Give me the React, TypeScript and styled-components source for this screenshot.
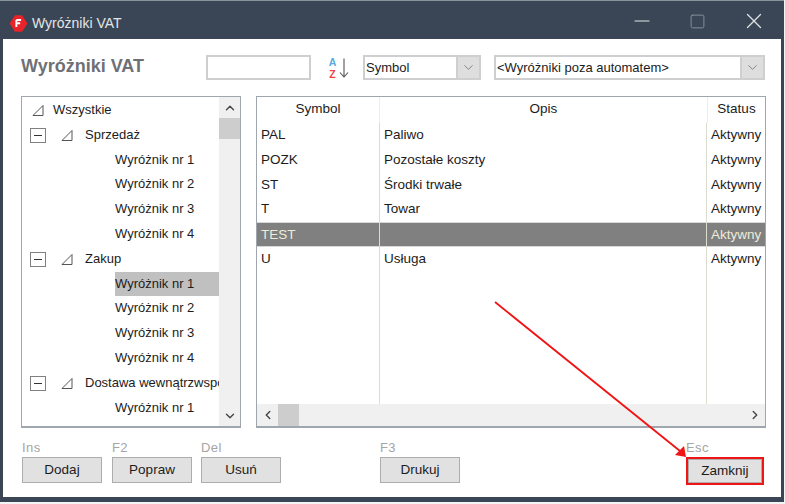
import styled, { createGlobalStyle } from 'styled-components';
import { ChevronDown, ChevronUp, ChevronLeft, ChevronRight, X, Minus, Square } from 'lucide-react';

const GlobalStyle = createGlobalStyle`
  html, body { margin: 0; padding: 0; background: #f4f5f6; }
  body { font-family: "Liberation Sans", Arial, sans-serif; font-size: 13px; color: #1c1c1c; }
`;

const treeRows = [
  { label: 'Wszystkie', level: 0 },
  { label: 'Sprzedaż', level: 1 },
  { label: 'Wyróżnik nr 1', level: 2 },
  { label: 'Wyróżnik nr 2', level: 2 },
  { label: 'Wyróżnik nr 3', level: 2 },
  { label: 'Wyróżnik nr 4', level: 2 },
  { label: 'Zakup', level: 1 },
  { label: 'Wyróżnik nr 1', level: 2, selected: true },
  { label: 'Wyróżnik nr 2', level: 2 },
  { label: 'Wyróżnik nr 3', level: 2 },
  { label: 'Wyróżnik nr 4', level: 2 },
  { label: 'Dostawa wewnątrzwspólnotowa', level: 1 },
  { label: 'Wyróżnik nr 1', level: 2 },
];

const gridRows = [
  { symbol: 'PAL', opis: 'Paliwo' },
  { symbol: 'POZK', opis: 'Pozostałe koszty' },
  { symbol: 'ST', opis: 'Środki trwałe' },
  { symbol: 'T', opis: 'Towar' },
  { symbol: 'TEST', opis: '', selected: true },
  { symbol: 'U', opis: 'Usługa' },
];

const App = () => {
  return (
    <Page>
      <GlobalStyle />
      <Window>
        <TitleBar>
          <AppLogo viewBox="0 0 16 16">
            <polygon points="5,1 11,1 15.5,8 11,15 5,15 0.5,8" fill="#e8232a" />
            <path d="M6.2 5h4M6.2 5v6M6.2 7.8h3.2" stroke="#fff" strokeWidth="1.6" fill="none" />
          </AppLogo>
          <WindowTitle>Wyróżniki VAT</WindowTitle>
          <WindowButtons>
            <Minus size={24} strokeWidth={1.2} />
            <Square size={17} strokeWidth={1.4} />
            <X size={26} strokeWidth={1.2} />
          </WindowButtons>
        </TitleBar>
        <Client>
          <Toolbar>
            <Heading>Wyróżniki VAT</Heading>
            <SearchInput />
            <SortIcon>
              <SortLetters>
                <SortA>A</SortA>
                <SortZ>Z</SortZ>
              </SortLetters>
              <SortArrow viewBox="0 0 10 20">
                <path d="M5 0.5V19M1 14.5L5 19L9 14.5" fill="none" stroke="#555" strokeWidth="1.1" />
              </SortArrow>
            </SortIcon>
            <Combo $width={118}>
              <ComboText>Symbol</ComboText>
              <ComboButton>
                <ChevronDown size={15} strokeWidth={1.2} color="#666" />
              </ComboButton>
            </Combo>
            <Combo $width={271} $gap={13}>
              <ComboText>&lt;Wyróżniki poza automatem&gt;</ComboText>
              <ComboButton>
                <ChevronDown size={15} strokeWidth={1.2} color="#666" />
              </ComboButton>
            </Combo>
          </Toolbar>
          <Panels>
            <TreePanel>
              <TreeList>
                {treeRows.map((row, index) => (
                  <TreeRow key={index} $level={row.level}>
                    {row.level === 1 && <Collapse />}
                    {row.level < 2 && (
                      <TreeArrow viewBox="0 0 12 12" $level={row.level}>
                        <path d="M1 11.5H11V1.5Z" fill="none" stroke="#555" strokeWidth="1" />
                      </TreeArrow>
                    )}
                    <TreeLabel $selected={row.selected}>{row.label}</TreeLabel>
                  </TreeRow>
                ))}
              </TreeList>
              <VScroll>
                <ScrollEnd>
                  <ChevronUp size={14} strokeWidth={2.4} color="#444" />
                </ScrollEnd>
                <VThumb />
                <ScrollFill />
                <ScrollEnd>
                  <ChevronDown size={14} strokeWidth={2.4} color="#444" />
                </ScrollEnd>
              </VScroll>
            </TreePanel>
            <GridPanel>
              <GridHead>
                <HeadCell $width={123}>Symbol</HeadCell>
                <HeadCell $width={328}>Opis</HeadCell>
                <HeadCell $width={57}>Status</HeadCell>
              </GridHead>
              <GridBody>
                {gridRows.map((row) => (
                  <GridRow key={row.symbol} $selected={row.selected}>
                    <Cell $width={123}>{row.symbol}</Cell>
                    <Cell $width={327}>{row.opis}</Cell>
                    <Cell $width={58}>Aktywny</Cell>
                  </GridRow>
                ))}
                <GridFill>
                  <FillCell $width={123} />
                  <FillCell $width={327} />
                </GridFill>
              </GridBody>
              <HScroll>
                <HEnd>
                  <ChevronLeft size={14} strokeWidth={2.4} color="#444" />
                </HEnd>
                <HThumb />
                <ScrollFill />
                <HEnd>
                  <ChevronRight size={14} strokeWidth={2.4} color="#444" />
                </HEnd>
              </HScroll>
            </GridPanel>
          </Panels>
          <Footer>
            <Action $gap={0}>
              <Shortcut>Ins</Shortcut>
              <ActionButton>Dodaj</ActionButton>
            </Action>
            <Action $gap={10}>
              <Shortcut>F2</Shortcut>
              <ActionButton>Popraw</ActionButton>
            </Action>
            <Action $gap={9}>
              <Shortcut>Del</Shortcut>
              <ActionButton>Usuń</ActionButton>
            </Action>
            <Action $gap={99}>
              <Shortcut>F3</Shortcut>
              <ActionButton>Drukuj</ActionButton>
            </Action>
            <Action $gap={226}>
              <Shortcut>Esc</Shortcut>
              <ActionButton $marked>Zamknij</ActionButton>
            </Action>
          </Footer>
        </Client>
      </Window>
      <Annotation viewBox="0 0 785 504">
        <line x1="495" y1="302" x2="680" y2="451" stroke="#f01414" strokeWidth="1.8" />
        <polygon points="686,457 675,455 684,446" fill="#f01414" />
      </Annotation>
    </Page>
  );
};

export default App;

const Page = styled.div`
  position: relative;
  width: 785px;
  height: 504px;
  overflow: hidden;
`;

const Window = styled.div`
  width: 784px;
  height: 502px;
  box-sizing: border-box;
  display: flex;
  flex-direction: column;
  background: #3a4655;
  border-top: 1px solid #8b939c;
  padding: 0 3px 5px 3px;
`;

const TitleBar = styled.div`
  display: flex;
  align-items: center;
  height: 38px;
  margin-left: 6px;
  flex-shrink: 0;
`;

const AppLogo = styled.svg`
  width: 19px;
  height: 19px;
  margin-top: 6px;
`;

const WindowTitle = styled.div`
  margin: 6px 0 0 4px;
  color: #e2e5e8;
  font-size: 14px;
`;

const WindowButtons = styled.div`
  display: flex;
  align-items: center;
  gap: 35px;
  margin: 2px 14px 0 auto;
  color: #e0e3e6;
  svg:nth-child(2) { color: #87909a; }
`;

const Client = styled.div`
  flex: 1;
  display: flex;
  flex-direction: column;
  background: #fff;
  padding: 0 0 0 18px;
  min-height: 0;
`;

const Toolbar = styled.div`
  display: flex;
  align-items: flex-start;
  height: 57px;
  padding-top: 16px;
  box-sizing: border-box;
  flex-shrink: 0;
`;

const Heading = styled.div`
  width: 185px;
  margin-top: 1px;
  color: #6f7076;
  font-size: 18px;
  font-weight: 700;
  line-height: 20px;
`;

const SearchInput = styled.div`
  width: 105px;
  height: 25px;
  box-sizing: border-box;
  border: 2px solid #cdcfd0;
`;

const SortIcon = styled.div`
  display: flex;
  align-items: center;
  gap: 2px;
  width: 35px;
  height: 25px;
  margin-left: 17px;
`;

const SortLetters = styled.div`
  display: flex;
  flex-direction: column;
  align-items: center;
  width: 9px;
  font-size: 10.5px;
  font-weight: 700;
  line-height: 12px;
`;

const SortA = styled.span`
  color: #58a9df;
`;

const SortZ = styled.span`
  color: #ee3f45;
`;

const SortArrow = styled.svg`
  width: 10px;
  height: 20px;
`;

const Combo = styled.div<{ $width: number; $gap?: number }>`
  display: flex;
  align-items: center;
  justify-content: space-between;
  width: ${(props) => props.$width}px;
  height: 25px;
  margin-left: ${(props) => props.$gap ?? 0}px;
  box-sizing: border-box;
  border: 2px solid #cdcfd0;
`;

const ComboText = styled.div`
  padding-left: 1px;
  font-size: 13px;
`;

const ComboButton = styled.div`
  display: flex;
  align-items: center;
  justify-content: center;
  width: 23px;
  height: 21px;
  box-sizing: border-box;
  background: #dedede;
  border-left: 2px solid #cdcfd0;
`;

const Panels = styled.div`
  display: flex;
  gap: 15px;
  height: 332px;
  flex-shrink: 0;
`;

const TreePanel = styled.div`
  display: flex;
  width: 220px;
  box-sizing: border-box;
  border: 1px solid #a0a6ad;
  border-bottom-width: 2px;
`;

const TreeList = styled.div`
  flex: 1;
  min-width: 0;
  overflow: hidden;
  padding-top: 1px;
`;

const TreeRow = styled.div<{ $level: number }>`
  display: flex;
  align-items: center;
  height: 24.8px;
  white-space: nowrap;
  padding-left: ${(props) => (props.$level === 0 ? 10 : props.$level === 1 ? 8 : 93)}px;
`;

const Collapse = styled.div`
  position: relative;
  width: 16px;
  height: 15px;
  box-sizing: border-box;
  border: 1px solid #808080;
  margin-right: 15px;
  flex-shrink: 0;
  &::after {
    content: '';
    position: absolute;
    left: 3px;
    right: 3px;
    top: 6px;
    height: 1px;
    background: #333;
  }
`;

const TreeArrow = styled.svg<{ $level: number }>`
  width: 12px;
  height: 12px;
  margin-right: ${(props) => (props.$level === 0 ? 9 : 12)}px;
  flex-shrink: 0;
`;

const TreeLabel = styled.div<{ $selected?: boolean }>`
  flex: ${(props) => (props.$selected ? 1 : 'none')};
  height: 24.8px;
  line-height: 24px;
  background: ${(props) => (props.$selected ? '#c0c0c0' : 'transparent')};
  font-size: 13px;
`;

const VScroll = styled.div`
  display: flex;
  flex-direction: column;
  width: 21px;
  flex-shrink: 0;
  background: #f0f0f0;
`;

const ScrollEnd = styled.div`
  display: flex;
  align-items: center;
  justify-content: center;
  height: 21px;
  flex-shrink: 0;
`;

const VThumb = styled.div`
  height: 21px;
  background: #cdcdcd;
`;

const ScrollFill = styled.div`
  flex: 1;
`;

const GridPanel = styled.div`
  display: flex;
  flex-direction: column;
  width: 510px;
  box-sizing: border-box;
  border: 1px solid #a0a6ad;
  border-bottom-width: 2px;
  overflow: hidden;
`;

const GridHead = styled.div`
  display: flex;
  height: 26px;
  flex-shrink: 0;
`;

const HeadCell = styled.div<{ $width: number }>`
  width: ${(props) => props.$width}px;
  box-sizing: border-box;
  text-align: center;
  line-height: 24px;
  font-size: 13.5px;
  border-right: 1px solid #ececec;
  flex-shrink: 0;
  &:last-child { border-right: none; }
`;

const GridBody = styled.div`
  flex: 1;
  display: flex;
  flex-direction: column;
  min-height: 0;
`;

const GridRow = styled.div<{ $selected?: boolean }>`
  display: flex;
  height: 24.8px;
  flex-shrink: 0;
  box-sizing: border-box;
  background: ${(props) => (props.$selected ? '#808080' : 'transparent')};
  color: ${(props) => (props.$selected ? '#ecedd8' : 'inherit')};
  ${(props) => props.$selected && 'border-top: 1px solid #d8d8d8; border-bottom: 1px solid #d8d8d8;'}
`;

const Cell = styled.div<{ $width: number }>`
  width: ${(props) => props.$width}px;
  box-sizing: border-box;
  padding-left: 4px;
  line-height: 23px;
  font-size: 13.5px;
  white-space: nowrap;
  overflow: hidden;
  flex-shrink: 0;
  border-right: 1px solid #dcdccf;
  &:last-child { border-right: none; }
`;

const GridFill = styled.div`
  flex: 1;
  display: flex;
`;

const FillCell = styled.div<{ $width: number }>`
  width: ${(props) => props.$width}px;
  box-sizing: border-box;
  border-right: 1px solid #dcdccf;
`;

const HScroll = styled.div`
  display: flex;
  height: 22px;
  flex-shrink: 0;
  background: #f0f0f0;
`;

const HEnd = styled.div`
  display: flex;
  align-items: center;
  justify-content: center;
  width: 21px;
  flex-shrink: 0;
`;

const HThumb = styled.div`
  width: 21px;
  background: #cdcdcd;
`;

const Footer = styled.div`
  display: flex;
  align-items: flex-start;
  padding: 12px 0 0 1px;
`;

const Action = styled.div<{ $gap: number }>`
  display: flex;
  flex-direction: column;
  margin-left: ${(props) => props.$gap}px;
`;

const Shortcut = styled.div`
  height: 17px;
  line-height: 15px;
  font-size: 13px;
  color: #a5a5a5;
  letter-spacing: 0.4px;
`;

const ActionButton = styled.div<{ $marked?: boolean }>`
  width: ${(props) => (props.$marked ? 78 : 80)}px;
  height: ${(props) => (props.$marked ? 28 : 26)}px;
  box-sizing: border-box;
  text-align: center;
  line-height: 23px;
  font-size: 13.5px;
  background: #e1e1e1;
  border: ${(props) => (props.$marked ? '2px solid #f01414' : '1px solid #adadad')};
  ${(props) => props.$marked && 'box-shadow: inset 0 0 0 1px #adadad;'}
`;

const Annotation = styled.svg`
  position: absolute;
  left: 0;
  top: 0;
  width: 785px;
  height: 504px;
  pointer-events: none;
`;
